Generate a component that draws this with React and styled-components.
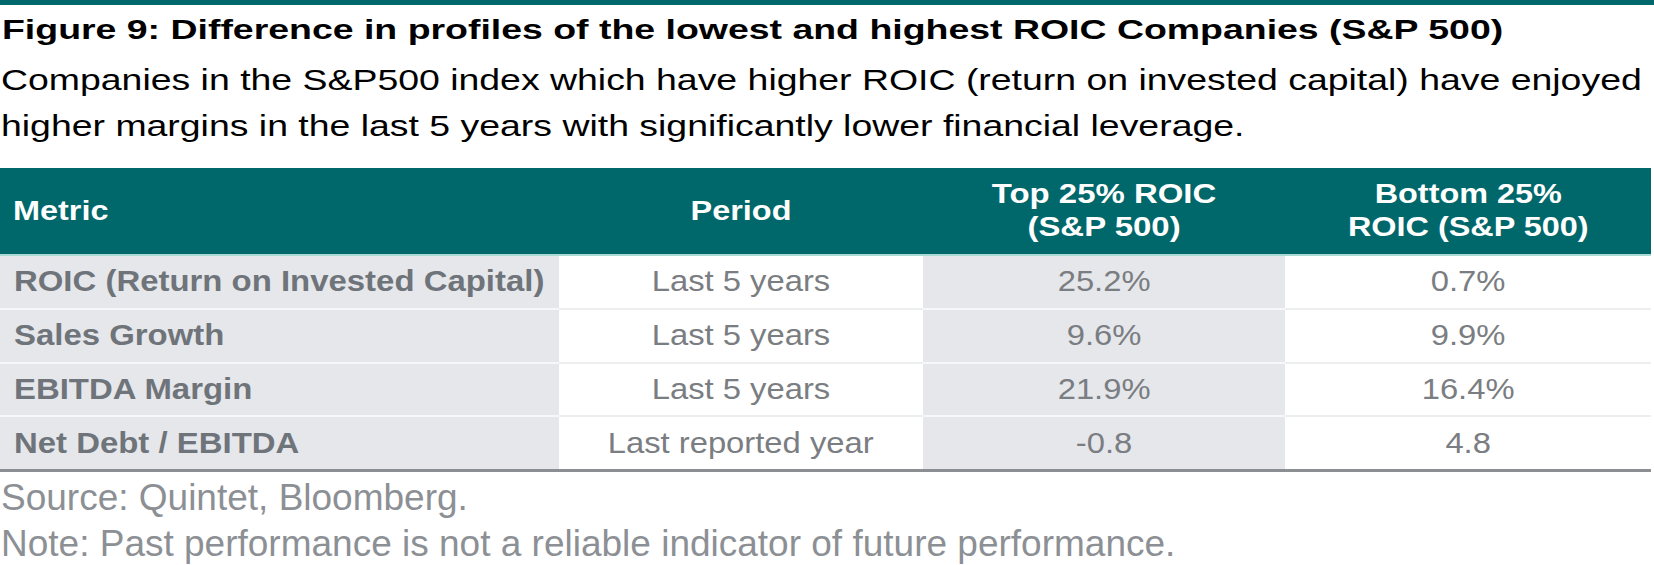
import styled, { createGlobalStyle } from "styled-components"

const GlobalStyle = createGlobalStyle`
body{
  margin:0;
  background:#fff;
  font-family:"Liberation Sans", Arial, sans-serif;
}
`

const Page = styled.div`
width:1654px;
height:565px;
overflow:hidden;
border-top:5px solid #00676a;
box-sizing:border-box;
`

// the source picture is stretched sideways, so text gets a scaleX
const Wide = styled.span`
display:inline-block;
white-space:nowrap;
transform:scaleX(${p => p.$x});
transform-origin:${p => p.$origin || "left"} center;
`

const Title = styled.h1`
margin:0;
padding:9px 0 0 2px;
font-size:28px;
line-height:32px;
font-weight:bold;
color:#000;
`

const Lead = styled.div`
margin-top:11px;
padding-left:1px;
font-size:29px;
line-height:46px;
color:#000;
`

const Line = styled.div``

const Table = styled.div`
margin-top:19px;
width:1651px;
display:grid;
grid-template-columns:559px 364px 362px 1fr;
border-bottom:3px solid #8b8f94;
`

const HeadCell = styled.div`
background:#00676a;
color:#fff;
font-weight:bold;
font-size:27px;
line-height:33px;
height:86px;
display:flex;
align-items:center;
justify-content:${p => (p.left ? "flex-start" : "center")};
text-align:center;
padding-left:${p => (p.left ? "13px" : "0")};
border-bottom:2px solid #a9dbd6;
`

const Cell = styled.div`
height:51.75px;
display:flex;
align-items:center;
justify-content:${p => (p.left ? "flex-start" : "center")};
padding-left:${p => (p.left ? "14px" : "0")};
background:${p => (p.shade ? "#e5e7eb" : "#fff")};
border-top:${p => (p.first ? "0" : "2px solid " + (p.shade ? "#f6f7f9" : "#eceef0"))};
font-size:29px;
font-weight:${p => (p.left ? "bold" : "normal")};
color:${p => (p.left ? "#6f747a" : "#7a7d81")};
`

const Footer = styled.div`
padding:3px 0 0 1px;
font-size:37px;
line-height:46px;
color:#8c9095;
`

const rows = [
  ["ROIC (Return on Invested Capital)", "Last 5 years", "25.2%", "0.7%"],
  ["Sales Growth", "Last 5 years", "9.6%", "9.9%"],
  ["EBITDA Margin", "Last 5 years", "21.9%", "16.4%"],
  ["Net Debt / EBITDA", "Last reported year", "-0.8", "4.8"],
]

const App = () => {
  return (
    <Page>
      <GlobalStyle />
      <Title>
        <Wide $x={1.337}>Figure 9: Difference in profiles of the lowest and highest ROIC Companies (S&amp;P 500)</Wide>
      </Title>
      <Lead>
        <Line><Wide $x={1.29}>Companies in the S&amp;P500 index which have higher ROIC (return on invested capital) have enjoyed</Wide></Line>
        <Line><Wide $x={1.29}>higher margins in the last 5 years with significantly lower financial leverage.</Wide></Line>
      </Lead>
      <Table>
        <HeadCell left><Wide $x={1.2}>Metric</Wide></HeadCell>
        <HeadCell><Wide $x={1.2} $origin="center">Period</Wide></HeadCell>
        <HeadCell><Wide $x={1.22} $origin="center">Top 25% ROIC<br />(S&amp;P 500)</Wide></HeadCell>
        <HeadCell><Wide $x={1.2} $origin="center">Bottom 25%<br />ROIC (S&amp;P 500)</Wide></HeadCell>
        {rows.map((row, i) => [
          <Cell key={i + "a"} left shade first={i === 0}><Wide $x={1.135}>{row[0]}</Wide></Cell>,
          <Cell key={i + "b"} first={i === 0}><Wide $x={1.13} $origin="center">{row[1]}</Wide></Cell>,
          <Cell key={i + "c"} shade first={i === 0}><Wide $x={1.13} $origin="center">{row[2]}</Wide></Cell>,
          <Cell key={i + "d"} first={i === 0}><Wide $x={1.13} $origin="center">{row[3]}</Wide></Cell>,
        ])}
      </Table>
      <Footer>
        <Line>Source: Quintet, Bloomberg.</Line>
        <Line>Note: Past performance is not a reliable indicator of future performance.</Line>
      </Footer>
    </Page>
  )
}

export default App
